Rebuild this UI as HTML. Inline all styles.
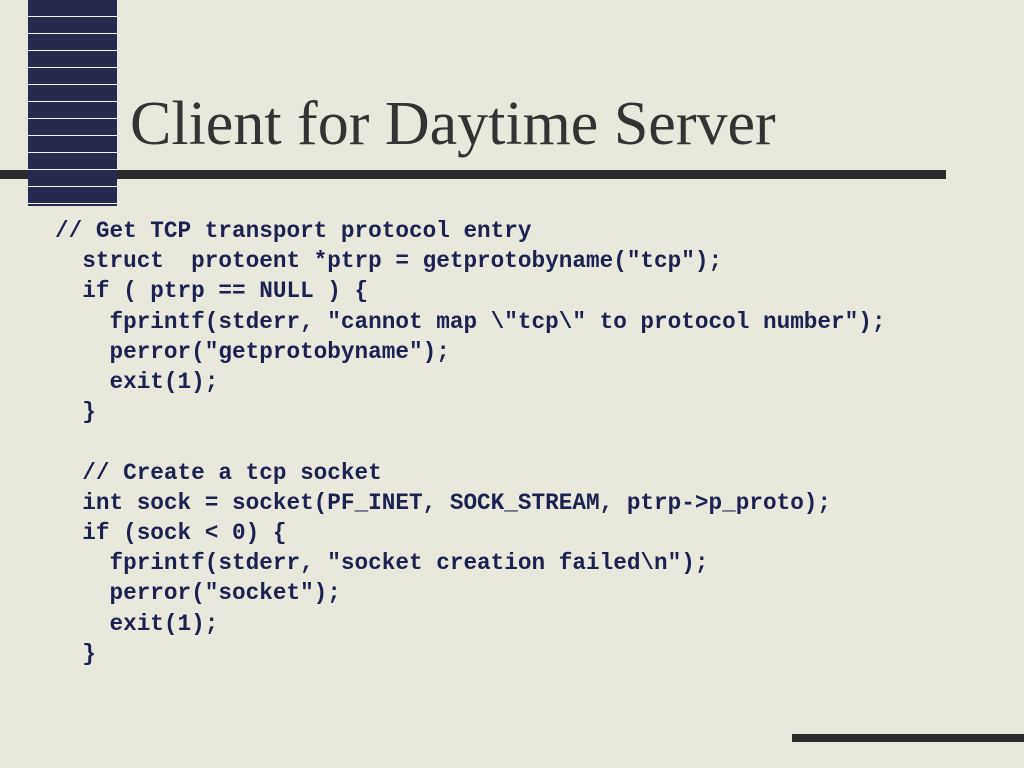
<!DOCTYPE html>
<html><head><meta charset="utf-8"><style>
body{margin:0;width:1024px;height:768px;overflow:hidden;background:#e9e8dc;position:relative;font-family:"Liberation Serif",serif}
.blk{position:absolute;left:28px;top:0;width:89px;height:206px;background:repeating-linear-gradient(to bottom,#262a4f 0,#262a4f 16px,#f4f4f0 16px,#f4f4f0 17px)}
.bar{position:absolute;left:0;top:170px;width:946px;height:9px;background:#2b2b2b}
.bar2{position:absolute;left:792px;top:734px;width:232px;height:8px;background:#2b2b2b}
h1{position:absolute;left:130px;top:86px;margin:0;font-weight:normal;font-size:62px;color:#333;line-height:76px;white-space:nowrap}
pre{position:absolute;left:55px;top:216px;margin:0;font-family:"Liberation Mono",monospace;font-weight:bold;font-size:22.7px;line-height:30.2px;color:#1c2250}
</style></head><body>
<div class="bar"></div><div class="blk"></div><div class="bar2"></div>
<h1>Client for Daytime Server</h1>
<pre>// Get TCP transport protocol entry
  struct  protoent *ptrp = getprotobyname("tcp");
  if ( ptrp == NULL ) {
    fprintf(stderr, "cannot map \"tcp\" to protocol number");
    perror("getprotobyname");
    exit(1);
  }

  // Create a tcp socket
  int sock = socket(PF_INET, SOCK_STREAM, ptrp-&gt;p_proto);
  if (sock &lt; 0) {
    fprintf(stderr, "socket creation failed\n");
    perror("socket");
    exit(1);
  }</pre>
</body></html>
